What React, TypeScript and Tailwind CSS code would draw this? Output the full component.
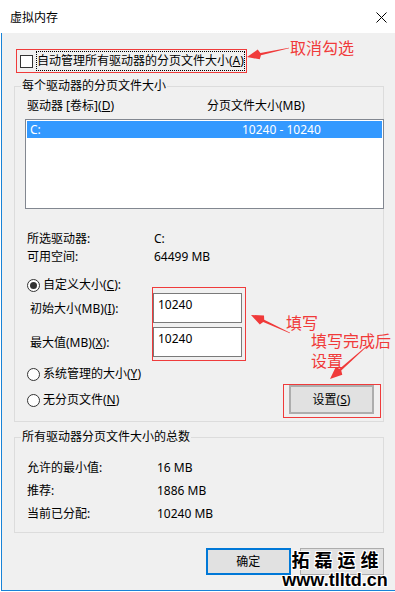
import React from "react";

const RED = "#f03a3a";

type Pt = [number, number];

// tapered annotation arrow: thin tail, filled head at `to`
function Arrow({ from, to, head = 14, half = 5 }: { from: Pt; to: Pt; head?: number; half?: number }) {
  const dx = to[0] - from[0];
  const dy = to[1] - from[1];
  const len = Math.hypot(dx, dy);
  const ux = dx / len;
  const uy = dy / len;
  const nx = -uy;
  const ny = ux;
  const bx = to[0] - ux * head;
  const by = to[1] - uy * head;
  const pts: Pt[] = [
    [from[0] + nx * 0.3, from[1] + ny * 0.3],
    [bx + nx * 1.2, by + ny * 1.2],
    [bx + ux * 2 + nx * half, by + uy * 2 + ny * half],
    to,
    [bx + ux * 2 - nx * half, by + uy * 2 - ny * half],
    [bx - nx * 1.2, by - ny * 1.2],
    [from[0] - nx * 0.3, from[1] - ny * 0.3],
  ];
  return <polygon points={pts.map((p) => p.join(",")).join(" ")} fill={RED} />;
}

function Radio({ checked }: { checked?: boolean }) {
  return (
    <span className="w-[13px] h-[13px] rounded-full border border-[#333] bg-white flex items-center justify-center shrink-0">
      {checked && <span className="w-[7px] h-[7px] rounded-full bg-[#333]" />}
    </span>
  );
}

export default function App() {
  return (
    <div className="relative w-[395px] h-[592px] overflow-hidden bg-white flex flex-col text-[12px] leading-[16px] text-black font-['Noto_Sans','Noto_Sans_CJK_SC',sans-serif]">
      {/* title bar */}
      <div className="h-[33px] shrink-0 flex items-center justify-between pl-[10px] pr-[8px] pt-[2px]">
        <span>虚拟内存</span>
        <svg width="11" height="11" viewBox="0 0 11 11">
          <path d="M0.5 0.5L10.5 10.5M10.5 0.5L0.5 10.5" stroke="#000" strokeWidth="1" />
        </svg>
      </div>

      <div className="flex-1 ml-[1px] mb-[1px] border-l border-b border-[#1883d7] bg-[#f0f0f0] flex flex-col pl-[12px] pr-[11px]">
        {/* auto manage checkbox */}
        <div className="mt-[16px] ml-[2px] w-[231px] h-[24px] border border-[#ef3b3b] flex items-center pl-[3px]">
          <span className="w-[13px] h-[13px] border border-[#333] bg-white shrink-0" />
          <span className="ml-[3px] h-[20px] flex items-center border border-dotted border-black whitespace-nowrap">
            自动管理所有驱动器的分页文件大小(<u>A</u>)
          </span>
        </div>

        {/* per drive */}
        <fieldset className="mt-[5px] border border-[#dcdcdc] p-0 min-w-0">
          <legend className="ml-[6px] px-[1px] leading-[16px]">每个驱动器的分页文件大小</legend>
          <div className="pl-[12px] pt-[4px] pb-[3px]">
            <div className="flex">
              <span className="w-[180px]">
                驱动器 [卷标](<u>D</u>)
              </span>
              <span>分页文件大小(MB)</span>
            </div>
            <div className="mt-[5px] -ml-[2px] w-[359px] h-[90px] border border-[#828790] bg-white p-[1px]">
              <div className="h-[17px] bg-[#3399ff] text-white flex items-center pl-[3px]">
                <span className="w-[212px]">C:</span>
                <span>10240 - 10240</span>
              </div>
            </div>

            <div className="mt-[22px] flex">
              <span className="w-[127px]">所选驱动器:</span>
              <span>C:</span>
            </div>
            <div className="mt-[2px] flex">
              <span className="w-[127px]">可用空间:</span>
              <span>64499 MB</span>
            </div>

            <div className="flex">
              <div className="w-[125px] flex flex-col">
                <div className="mt-[12px] flex items-center">
                  <Radio checked />
                  <span className="ml-[3px]">
                    自定义大小(<u>C</u>):
                  </span>
                </div>
                <div className="mt-[8px] pl-[3px]">
                  初始大小(MB)(<u>I</u>):
                </div>
                <div className="mt-[18px] pl-[3px]">
                  最大值(MB)(<u>X</u>):
                </div>
                <div className="mt-[15px] flex items-center">
                  <Radio />
                  <span className="ml-[3px]">
                    系统管理的大小(<u>Y</u>)
                  </span>
                </div>
                <div className="mt-[10px] flex items-center">
                  <Radio />
                  <span className="ml-[3px]">
                    无分页文件(<u>N</u>)
                  </span>
                </div>
              </div>

              <div className="flex flex-col">
                <div className="mt-[22px] w-[94px] h-[74px] border border-[#ef3b3b] pt-[5px] flex flex-col gap-[4px]">
                  <div className="w-[89px] h-[30px] border border-[#7a7a7a] bg-white pl-[4px] pt-[3px]">10240</div>
                  <div className="w-[89px] h-[30px] border border-[#7a7a7a] bg-white pl-[4px] pt-[3px]">10240</div>
                </div>
                <div className="mt-[23px] ml-[131px] w-[98px] h-[34px] border border-[#ef3b3b] pl-[5px]">
                  <button className="w-[85px] h-[29px] border-2 border-[#adadad] bg-[#e1e1e1] flex items-center justify-center">
                    <span>
                      设置(<u>S</u>)
                    </span>
                  </button>
                </div>
              </div>
            </div>
          </div>
        </fieldset>

        {/* totals */}
        <fieldset className="mt-[7px] border border-[#dcdcdc] p-0 min-w-0">
          <legend className="ml-[6px] px-[1px] leading-[16px]">所有驱动器分页文件大小的总数</legend>
          <div className="pl-[12px] pt-[15px] pb-[10px] flex flex-col gap-[7px]">
            <div className="flex">
              <span className="w-[130px]">允许的最小值:</span>
              <span>16 MB</span>
            </div>
            <div className="flex">
              <span className="w-[130px]">推荐:</span>
              <span>1886 MB</span>
            </div>
            <div className="flex">
              <span className="w-[130px]">当前已分配:</span>
              <span>10240 MB</span>
            </div>
          </div>
        </fieldset>

        <div className="mt-[15px] ml-[192px] flex gap-[9px]">
          <button className="w-[86px] h-[27px] border-2 border-[#0078d7] bg-[#e1e1e1] flex items-center justify-center">
            确定
          </button>
          {/* cancel button: its caption is hidden under the watermark in the shot */}
          <button aria-label="取消" className="w-[86px] h-[27px] border border-[#adadad] bg-[#e1e1e1]" />
        </div>
      </div>

      {/* red annotations */}
      <svg className="absolute inset-0 pointer-events-none" width="395" height="592">
        <Arrow from={[289, 48]} to={[247, 57]} />
        <Arrow from={[290, 333]} to={[251, 315]} />
        <Arrow from={[367, 346]} to={[330, 379]} />
      </svg>
      <span className="absolute left-[290px] top-[39px] text-[16px] leading-[16px] text-[#f03a3a] font-['Noto_Sans_CJK_SC',sans-serif]">
        取消勾选
      </span>
      <span className="absolute left-[286px] top-[314px] text-[16px] leading-[16px] text-[#f03a3a] font-['Noto_Sans_CJK_SC',sans-serif]">
        填写
      </span>
      <span className="absolute left-[311px] top-[330px] w-[84px] text-[16px] leading-[20px] whitespace-pre-line text-[#f03a3a] font-['Noto_Sans_CJK_SC',sans-serif]">
        {"填写完成后\n设置"}
      </span>

      {/* watermark */}
      <div className="absolute left-[279px] top-[552px] w-[112px] text-center text-[18px] leading-[19px] font-bold whitespace-pre text-black font-['Liberation_Sans','Noto_Sans_CJK_SC',sans-serif] [text-shadow:1px_0_#fff,-1px_0_#fff,0_1px_#fff,0_-1px_#fff,1px_1px_#fff,-1px_-1px_#fff,1px_-1px_#fff,-1px_1px_#fff]">
        {"拓 磊 运 维\nwww.tlltd.cn"}
      </div>
    </div>
  );
}
